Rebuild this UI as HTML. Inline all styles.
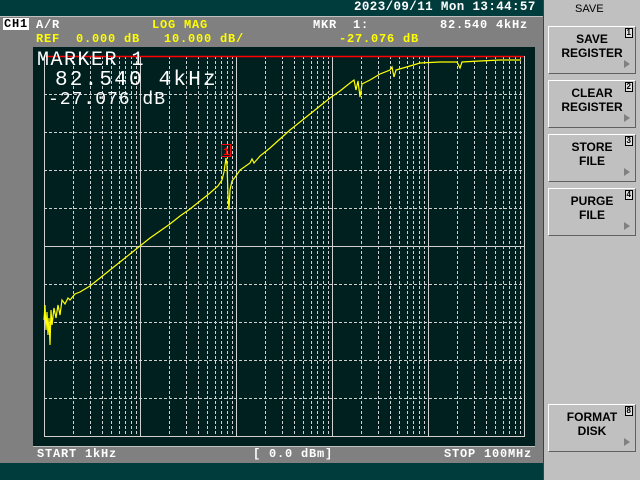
<!DOCTYPE html>
<html><head><style>
body{margin:0;width:640px;height:480px;background:#003c3c;position:relative;overflow:hidden;font-family:"Liberation Mono",monospace;}
.t{position:absolute;white-space:pre;font-weight:bold;font-size:12px;line-height:12px;letter-spacing:0.8px}
.btn{position:absolute;left:548px;width:86px;height:46px;background:#c0c0c0;border:1px solid #fff;border-right-color:#606060;border-bottom-color:#606060;font-family:"Liberation Sans",sans-serif;font-weight:bold;font-size:12px;line-height:14px;text-align:center;color:#000}
.btn .l{position:absolute;top:5px;left:0;right:0}
.btn .n{position:absolute;right:2px;top:1px;font-size:8px;line-height:8px;border:1px solid #000;padding:0 1px;background:#e0e0e0}
.btn .a{position:absolute;right:5px;bottom:5px;width:0;height:0;border-left:6px solid #808080;border-top:4px solid transparent;border-bottom:4px solid transparent}
</style></head><body>
<div class="t" style="left:354px;top:1px;color:#fff;font-size:12.5px;letter-spacing:0.4px">2023/09/11 Mon 13:44:57</div>
<div style="position:absolute;left:0;top:16px;width:543px;height:446px;background:#808080;border-top:1px solid #c0c0c0"></div>
<div style="position:absolute;left:543px;top:0;width:97px;height:480px;background:#c0c0c0;border-left:1px solid #404040"></div>
<div style="position:absolute;left:575px;top:3px;font-family:'Liberation Sans',sans-serif;font-size:11px;color:#000">SAVE</div>
<div class="btn" style="top:26px"><div class="l">SAVE<br>REGISTER</div><div class="n">1</div><div class="a"></div></div>
<div class="btn" style="top:80px"><div class="l">CLEAR<br>REGISTER</div><div class="n">2</div><div class="a"></div></div>
<div class="btn" style="top:134px"><div class="l">STORE<br>FILE</div><div class="n">3</div><div class="a"></div></div>
<div class="btn" style="top:188px"><div class="l">PURGE<br>FILE</div><div class="n">4</div><div class="a"></div></div>
<div class="btn" style="top:404px"><div class="l">FORMAT<br>DISK</div><div class="n">8</div><div class="a"></div></div>
<div class="t" style="left:3px;top:18px;background:#fff;color:#000;padding:0 1px">CH1</div>
<div class="t" style="left:36px;top:19px;color:#fff">A/R</div>
<div class="t" style="left:152px;top:19px;color:#ff0">LOG MAG</div>
<div class="t" style="left:313px;top:19px;color:#fff">MKR  1:</div>
<div class="t" style="left:440px;top:19px;color:#fff">82.540 4kHz</div>
<div class="t" style="left:36px;top:33px;color:#ff0">REF  0.000 dB   10.000 dB/</div>
<div class="t" style="left:339px;top:33px;color:#ff0">-27.076 dB</div>
<div style="position:absolute;left:33px;top:47px;width:502px;height:399px;background:#002020;border-bottom:1px solid #c0c0c0"></div>
<svg style="position:absolute;left:0;top:0" width="640" height="480">
<g id="g" stroke="#d0d0d0" stroke-width="1" fill="none"></g>
<polyline fill="none" stroke="#ff0" stroke-width="1.2" points="44,320 45,305 46,330 47,312 48,335 49,318 50,345 51,310 52,325 54,308 56,318 58,305 60,315 62,300 65,304 68,298 70,300 75,294 80,292 90,286 100,278 110,270 120,262 130,254 140,246 150,238 160,231 170,224 180,216 190,209 200,201 210,193 218,186 222,180 224,172 226,158 227,165 228,195 229,210 230,190 232,181 236,176 240,170 250,163 252,159 254,163 260,156 270,148 280,139 290,130 300,122 310,114 320,106 330,98 340,91 350,83 354,80 356,90 358,81 360,97 362,84 370,80 380,74 390,70 392,67 394,77 396,70 410,66 420,63 440,62 457,62 460,68 462,62 480,61 500,60 521,60"/>
<line x1="44" y1="56.5" x2="524" y2="56.5" stroke="#f00" stroke-width="1.5"/>
<rect x="221.5" y="144.5" width="9" height="12" fill="none" stroke="#f00"/>
<text x="223" y="155" fill="#f00" font-family="Liberation Mono" font-size="11" font-weight="bold">1</text>
</svg>
<div class="t" style="left:37px;top:51px;color:#fff;font-size:20px;line-height:20px;font-weight:normal;letter-spacing:1.5px">MARKER 1</div>
<div class="t" style="left:55px;top:70px;color:#fff;font-size:21px;line-height:21px;font-weight:normal;letter-spacing:2.2px">82.540 4kHz</div>
<div class="t" style="left:48px;top:91px;color:#fff;font-size:18px;line-height:18px;font-weight:normal;letter-spacing:1px">-27.076 dB</div>
<div class="t" style="left:37px;top:448px;color:#fff">START 1kHz</div>
<div class="t" style="left:253px;top:448px;color:#fff">[ 0.0 dBm]</div>
<div class="t" style="left:444px;top:448px;color:#fff">STOP 100MHz</div>
<script>
var g=document.getElementById('g'),s='';
for(var i=0;i<=10;i++){var y=56.5+i*38;s+='<line x1="44" x2="524" y1="'+y+'" y2="'+y+'"'+((i==0||i==5||i==10)?'':' stroke-dasharray="3,2"')+'/>';}
for(var d=0;d<5;d++){for(var k=1;k<10;k++){var x=Math.round(44+d*96+Math.log10(k)*96)+0.5;s+='<line y1="56" y2="437" x1="'+x+'" x2="'+x+'"'+(k==1?'':' stroke-dasharray="3,2"')+'/>';}}
s+='<line y1="56" y2="437" x1="524.5" x2="524.5"/>';
g.innerHTML=s;
</script>
</body></html>
